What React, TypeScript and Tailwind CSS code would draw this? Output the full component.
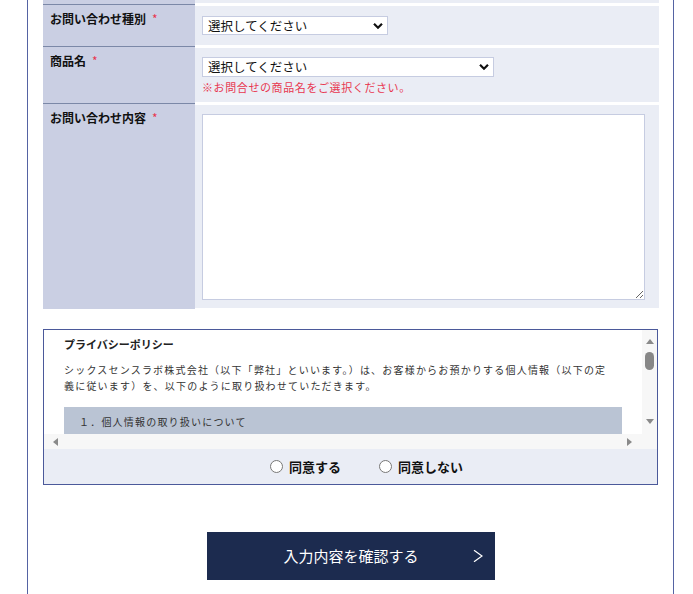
import React from 'react';

// Small dark chevron shown at the right end of each select
const SelectArrow = () => (
  <svg
    width="10"
    height="7"
    viewBox="0 0 10 7"
    className="pointer-events-none absolute right-[5px] top-1/2 -translate-y-1/2"
  >
    <path d="M1 1.2 L5 5.2 L9 1.2" fill="none" stroke="#111" strokeWidth="2.2" />
  </svg>
);

const SelectBox: React.FC<{ width: string; height: string }> = ({ width, height }) => (
  <div className={`relative ${width} ${height}`}>
    <select className="block w-full h-full appearance-none bg-white border border-[#c6cce1] pl-[5px] py-0 text-[12.5px] leading-[16px] text-[#111] outline-none">
      <option>選択してください</option>
    </select>
    <SelectArrow />
  </div>
);

const FormRow: React.FC<{ label: string; children: React.ReactNode }> = ({ label, children }) => (
  <div className="flex">
    <div className="w-[152px] shrink-0 bg-[#cacfe3] border-t border-[#7b88a7] pl-[7px] pt-[6px] text-[12px] leading-[16px] font-bold text-[#111]">
      {label}
      <span className="ml-[6px] font-normal text-[#e8364f]">*</span>
    </div>
    <div className="flex-1 bg-[#eaedf5] border-t-2 border-b border-white pl-[7px]">{children}</div>
  </div>
);

// Scrollbar arrow triangles
const Tri: React.FC<{ dir: 'up' | 'down' | 'left' | 'right' }> = ({ dir }) => {
  const points = {
    up: '0,5 4,0 8,5',
    down: '0,0 8,0 4,5',
    left: '5,0 5,8 0,4',
    right: '0,0 0,8 5,4',
  }[dir];
  const vertical = dir === 'up' || dir === 'down';
  return (
    <svg width={vertical ? 8 : 5} height={vertical ? 5 : 8} viewBox={vertical ? '0 0 8 5' : '0 0 5 8'}>
      <polygon points={points} fill="#8a8a8a" />
    </svg>
  );
};

export default function App() {
  return (
    <div className="min-h-screen bg-white font-['Noto_Sans_CJK_JP',sans-serif] text-[#111]">
      <div className="ml-[27px] w-[647px] border-x border-[#5563a3] pl-[15px] pr-[14px] pb-[20px]">
        {/* Form table */}
        <div className="w-[616px]">
          <div className="flex h-[4px]">
            <div className="w-[152px] bg-[#cacfe3]" />
            <div className="flex-1 bg-[#eaedf5] border-b border-white" />
          </div>

          <FormRow label="お問い合わせ種別">
            <div className="py-[10px]">
              <SelectBox width="w-[186px]" height="h-[19px]" />
            </div>
          </FormRow>

          <FormRow label="商品名">
            <div className="pt-[9px] pb-[7px]">
              <SelectBox width="w-[292px]" height="h-[20px]" />
              <p className="mt-[2px] text-[11px] leading-[16px] tracking-[0.6px] text-[#e8364f]">
                ※お問合せの商品名をご選択ください。
              </p>
            </div>
          </FormRow>

          <FormRow label="お問い合わせ内容">
            <div className="pt-[9px] pb-[8px]">
              <textarea className="block w-[443px] h-[186px] border border-[#c6cce1] bg-white outline-none resize" />
            </div>
          </FormRow>
        </div>

        {/* Privacy policy */}
        <div className="mt-[20px] w-[615px] border border-[#4b599a]">
          <div className="flex">
            <div className="w-[598px]">
              <div className="h-[104px] overflow-hidden bg-white px-[20px] pt-[6px] text-[#222]">
                <p className="text-[11px] leading-[16px] font-bold">プライバシーポリシー</p>
                <p className="mt-[10px] text-[10px] leading-[16px] tracking-[1.2px] text-[#333]">
                  シックスセンスラボ株式会社（以下「弊社」といいます。）は、お客様からお預かりする個人情報（以下の定
                  <br />
                  義に従います）を、以下のように取り扱わせていただきます。
                </p>
                <div className="mt-[13px] bg-[#bac4d4] pl-[15px] py-[9px] text-[10px] leading-[12px] tracking-[1.2px] text-[#333]">
                  １．個人情報の取り扱いについて
                </div>
              </div>
              <div className="h-[15px] bg-[#f7f7f7] flex items-center justify-between pl-[9px] pr-[10px]">
                <Tri dir="left" />
                <Tri dir="right" />
              </div>
            </div>
            <div className="w-[15px] bg-[#f7f7f7] flex flex-col items-center">
              <div className="mt-[9px]">
                <Tri dir="up" />
              </div>
              <div className="mt-[8px] w-[9px] h-[18px] rounded-full bg-[#878787]" />
              <div className="flex-1" />
              <div className="mb-[25px]">
                <Tri dir="down" />
              </div>
            </div>
          </div>

          <div className="h-[35px] bg-[#eaedf5] flex items-center justify-center gap-[38px] pl-[32px] text-[13px] font-bold">
            <label className="flex items-center">
              <input type="radio" name="agree" className="w-[13px] h-[13px] m-0" />
              <span className="ml-[6px]">同意する</span>
            </label>
            <label className="flex items-center">
              <input type="radio" name="agree" className="w-[13px] h-[13px] m-0" />
              <span className="ml-[6px]">同意しない</span>
            </label>
          </div>
        </div>

        {/* Submit */}
        <button className="relative mt-[47px] mx-auto flex items-center justify-center w-[288px] h-[48px] bg-[#1c2b4f] text-white text-[15px]">
          入力内容を確認する
          <svg width="10" height="13" viewBox="0 0 10 13" className="absolute right-[12px] top-1/2 -translate-y-1/2">
            <path d="M1 0.8 L9 6.5 L1 12.2" fill="none" stroke="#fff" strokeWidth="1.2" />
          </svg>
        </button>
      </div>
    </div>
  );
}
